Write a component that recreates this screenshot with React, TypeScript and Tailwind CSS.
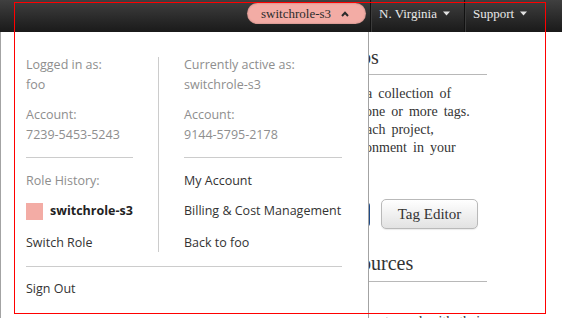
import React from "react";

function Caret() {
  return (
    <svg className="ml-[6px]" width="7" height="5" viewBox="0 0 7 5">
      <polygon points="0,0.5 7,0.5 3.5,4.5" fill="#e2e2e2" />
    </svg>
  );
}

function Sep() {
  return <div className="h-[32px] w-[2px] border-l border-r border-l-[#111111] border-r-[#3b3b3b]" />;
}

export default function App() {
  return (
    <div className="relative h-[318px] w-[562px] overflow-hidden bg-white font-['Liberation_Serif',serif]">
      {/* top bar */}
      <header className="flex h-[32px] bg-linear-to-b from-[#404040] to-[#1a1a1a] pl-[247px]">
        <div className="mt-[3px] flex h-[21px] w-[119px] items-center rounded-full bg-[#f3aca5] pl-[14px] pr-[17px] text-[13px] text-[#2b2b2b] shadow-[inset_0_0_2px_rgba(0,0,0,0.35)]">
          <span>switchrole-s3</span>
          <svg className="ml-auto" width="8" height="6" viewBox="0 0 8 6">
            <polyline points="1,5 4,1.8 7,5" fill="none" stroke="#2b2b2b" strokeWidth="2" />
          </svg>
        </div>
        <div className="ml-[4px]">
          <Sep />
        </div>
        <div className="flex h-[27px] w-[92px] items-center pl-[7px] text-[13px] text-[#e8e8e8]">
          N. Virginia
          <Caret />
        </div>
        <Sep />
        <div className="flex h-[27px] items-center pl-[7px] text-[13px] text-[#e8e8e8]">
          Support
          <Caret />
        </div>
      </header>

      {/* page content behind the menu */}
      <main className="ml-[369px] w-[118px] text-[#333333]">
        <h2 className="-ml-[8px] mt-[13px] whitespace-nowrap text-[20px] leading-[24px]">ps</h2>
        <div className="mt-[5px] h-px bg-[#b8b8b8]" />
        <div className="mt-[10px] whitespace-nowrap text-[14px] leading-[18px] [word-spacing:2.5px]">
          <div className="-ml-[3px]">a collection of</div>
          <div className="-ml-[4px]">one or more tags.</div>
          <div className="-ml-[3px]">ach project,</div>
          <div className="-ml-[4px]">onment in your</div>
        </div>
        <div className="mt-[42px] flex items-center">
          <div className="-ml-[60px] h-[25px] w-[61px] rounded-[4px] bg-[#1f4a86]" />
          <div className="ml-[11px] flex h-[30px] w-[97px] shrink-0 items-center justify-center rounded-[5px] border border-[#b9b9b9] bg-linear-to-b from-[#ffffff] to-[#e2e2e2] text-[15px] text-[#333333] shadow-[0_1px_1px_rgba(0,0,0,0.08)]">
            Tag Editor
          </div>
        </div>
        <h2 className="-ml-[8px] mt-[22px] whitespace-nowrap text-[20px] leading-[24px]">ources</h2>
        <div className="mt-[6px] h-px bg-[#b8b8b8]" />
        <div className="mt-[31px] whitespace-nowrap pl-[16px] text-[14px] leading-[18px] [word-spacing:2.5px]">
          tagged with their
        </div>
      </main>

      {/* account menu */}
      <div className="absolute left-0 top-[32px] h-[300px] w-[369px] border-x border-[#a3a3a3] bg-white pl-[25px] pr-[26px] pt-[23px] font-['Open_Sans',sans-serif] text-[12.5px] leading-[19.5px]">
        <div className="flex">
          <div className="w-[107px] text-[#8e8e8e]">
            <div className="whitespace-nowrap">Logged in as:</div>
            <div>foo</div>
            <div className="mt-[11px]">Account:</div>
            <div>7239-5453-5243</div>
            <div className="mt-[13px] h-px bg-[#cccccc]" />
            <div className="mt-[13px]">Role History:</div>
            <div className="mt-[10px] flex items-start">
              <div className="mt-[2.5px] h-[17px] w-[17px] shrink-0 bg-[#f3aca5]" />
              <span className="ml-[7px] whitespace-nowrap font-bold text-[#222222]">switchrole-s3</span>
            </div>
            <div className="mt-[12.5px] whitespace-nowrap text-[#333333]">Switch Role</div>
          </div>
          <div className="ml-[25px] mt-[2px] w-px bg-[#cccccc]" />
          <div className="ml-[25px] w-[158px] text-[#8e8e8e]">
            <div className="whitespace-nowrap">Currently active as:</div>
            <div>switchrole-s3</div>
            <div className="mt-[11px]">Account:</div>
            <div>9144-5795-2178</div>
            <div className="mt-[13px] h-px bg-[#cccccc]" />
            <div className="mt-[13px] text-[#333333]">My Account</div>
            <div className="mt-[10px] whitespace-nowrap text-[#333333]">Billing &amp; Cost Management</div>
            <div className="mt-[12.5px] text-[#333333]">Back to foo</div>
          </div>
        </div>
        <div className="mt-[13.5px] h-px bg-[#cccccc]" />
        <div className="mt-[12px] text-[#333333]">Sign Out</div>
      </div>

      {/* red outline */}
      <div className="pointer-events-none absolute left-[14px] top-[2px] h-[312px] w-[532px] border border-[#ff0000]" />
    </div>
  );
}
